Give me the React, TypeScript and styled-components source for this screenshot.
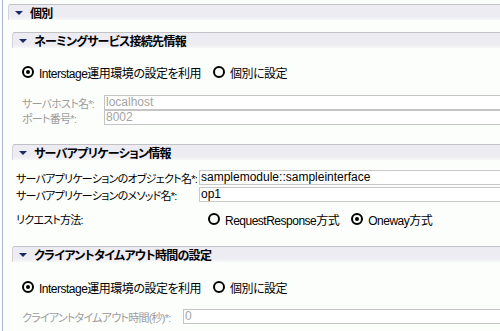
import React from "react";
import styled, { createGlobalStyle } from "styled-components";

const GlobalStyle = createGlobalStyle`
  html, body {
    margin: 0;
    padding: 0;
    background: #fcfefc;
  }
  body {
    font-family: "Liberation Sans", "Noto Sans CJK JP", sans-serif;
    font-size: 12px;
    font-feature-settings: "palt";
    color: #000;
  }
`;

const Root = styled.div`
  width: 500px;
  height: 331px;
  overflow: hidden;
  box-sizing: border-box;
  margin-left: 2px;
  border-left: 1px solid #a7b6cc;
  padding: 4px 0 0 5px;
`;

const Section = styled.div<{ indent?: number }>`
  margin-left: ${(p) => p.indent || 0}px;
`;

const Header = styled.div`
  display: flex;
  align-items: center;
  gap: 5px;
  height: 16px;
  box-sizing: border-box;
  padding-left: 6px;
  border-top: 1px solid #c2c2c6;
  border-left: 1px solid #d4d4da;
  border-top-left-radius: 3px;
  background: linear-gradient(#ececf2 0%, #ececf2 75%, #f6f7f8 100%);
  font-weight: bold;
  font-size: 12px;
  letter-spacing: -0.7px;
`;

const Triangle = styled.span`
  width: 0;
  height: 0;
  border-left: 4px solid transparent;
  border-right: 4px solid transparent;
  border-top: 4px solid #1a2a6a;
  margin-top: 1px;
  margin-right: 2px;
`;

const Body = styled.div<{ pad: number; top: number; bottom: number }>`
  padding: ${(p) => p.top}px 0 ${(p) => p.bottom}px ${(p) => p.pad}px;
  display: flex;
  flex-direction: column;
`;

const RadioRow = styled.div<{ mt?: number }>`
  display: flex;
  align-items: center;
  height: 16px;
  margin-top: ${(p) => p.mt || 0}px;
`;

const RadioItem = styled.label`
  display: flex;
  align-items: center;
  gap: 5px;
  margin-right: 12px;
  white-space: nowrap;
  letter-spacing: -0.5px;
`;

const RadioCircle = styled.span<{ checked?: boolean }>`
  width: 12px;
  height: 12px;
  box-sizing: border-box;
  border: 2px solid #000;
  border-radius: 50%;
  display: flex;
  align-items: center;
  justify-content: center;
  &::after {
    content: "";
    width: 4px;
    height: 4px;
    border-radius: 50%;
    background: ${(p) => (p.checked ? "#000" : "transparent")};
  }
`;

const FieldRow = styled.div<{ mt?: number }>`
  display: flex;
  align-items: center;
  height: 15px;
  margin-top: ${(p) => p.mt || 0}px;
`;

const Label = styled.span<{ width: number; disabled?: boolean }>`
  width: ${(p) => p.width}px;
  flex: none;
  white-space: nowrap;
  font-size: 11px;
  letter-spacing: -0.75px;
  color: ${(p) => (p.disabled ? "#9c9c9c" : "#000")};
`;

const Input = styled.div<{ disabled?: boolean }>`
  flex: 1;
  height: 15px;
  box-sizing: border-box;
  margin-right: -4px;
  border: 1px solid ${(p) => (p.disabled ? "#c4c4c4" : "#c8c8c8")};
  background: #fff;
  padding-left: 1px;
  line-height: 13px;
  color: ${(p) => (p.disabled ? "#a4a4a4" : "#000")};
  white-space: nowrap;
`;

const Radio: React.FC<{ checked?: boolean; children: React.ReactNode }> = ({
  checked,
  children,
}) => (
  <RadioItem>
    <RadioCircle checked={checked} />
    {children}
  </RadioItem>
);

const SectionHeader: React.FC<{ children: React.ReactNode }> = ({ children }) => (
  <Header>
    <Triangle />
    {children}
  </Header>
);

export default function App() {
  return (
    <>
      <GlobalStyle />
      <Root>
        <SectionHeader>個別</SectionHeader>
        <Section indent={4}>
          <div style={{ height: 12 }} />
          <SectionHeader>ネーミングサービス接続先情報</SectionHeader>
          <Body pad={10} top={16} bottom={19}>
            <RadioRow>
              <Radio checked>Interstage運用環境の設定を利用</Radio>
              <Radio>個別に設定</Radio>
            </RadioRow>
            <FieldRow mt={15}>
              <Label width={82} disabled>サーバホスト名*:</Label>
              <Input disabled>localhost</Input>
            </FieldRow>
            <FieldRow>
              <Label width={82} disabled>ポート番号*:</Label>
              <Input disabled>8002</Input>
            </FieldRow>
          </Body>

          <SectionHeader>サーバアプリケーション情報</SectionHeader>
          <Body pad={4} top={10} bottom={19}>
            <FieldRow>
              <Label width={183}>サーバアプリケーションのオブジェクト名*:</Label>
              <Input>samplemodule::sampleinterface</Input>
            </FieldRow>
            <FieldRow mt={2}>
              <Label width={183}>サーバアプリケーションのメソッド名*:</Label>
              <Input>op1</Input>
            </FieldRow>
            <RadioRow mt={9}>
              <Label width={192}>リクエスト方法:</Label>
              <Radio>RequestResponse方式</Radio>
              <Radio checked>Oneway方式</Radio>
            </RadioRow>
          </Body>

          <SectionHeader>クライアントタイムアウト時間の設定</SectionHeader>
          <Body pad={10} top={17} bottom={0}>
            <RadioRow>
              <Radio checked>Interstage運用環境の設定を利用</Radio>
              <Radio>個別に設定</Radio>
            </RadioRow>
            <FieldRow mt={14}>
              <Label width={161} disabled>クライアントタイムアウト時間(秒)*:</Label>
              <Input disabled>0</Input>
            </FieldRow>
          </Body>
        </Section>
      </Root>
    </>
  );
}
